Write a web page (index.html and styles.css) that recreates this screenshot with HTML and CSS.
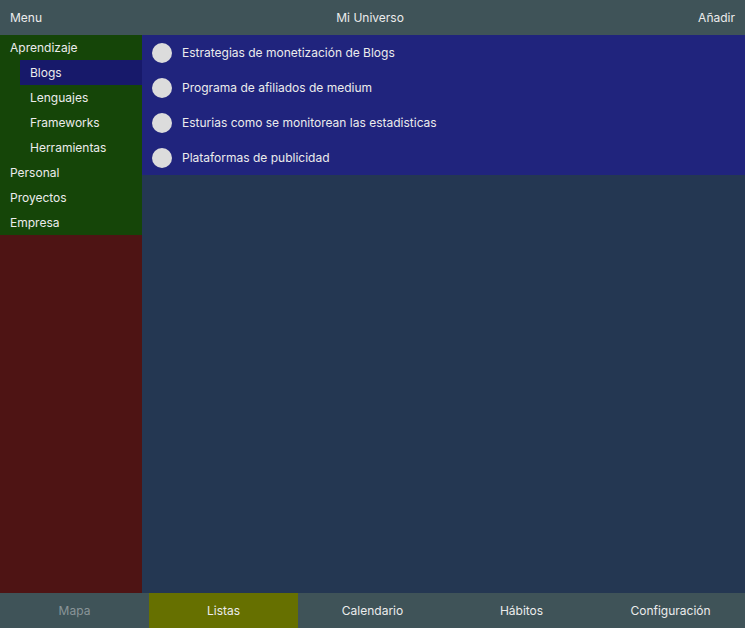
FILE: index.html
```html
<!DOCTYPE html>
<html lang="es">
<head>
<meta charset="utf-8">
<link rel="stylesheet" href="styles.css">
</head>
<body>
<div class="app">
  <header class="topbar">
    <span>Menu</span>
    <span>Mi Universo</span>
    <span>Añadir</span>
  </header>
  <div class="body">
    <aside class="sidebar">
      <nav class="menu">
        <div class="item">Aprendizaje</div>
        <div class="item sub active">Blogs</div>
        <div class="item sub">Lenguajes</div>
        <div class="item sub">Frameworks</div>
        <div class="item sub">Herramientas</div>
        <div class="item">Personal</div>
        <div class="item">Proyectos</div>
        <div class="item">Empresa</div>
      </nav>
      <div class="filler"></div>
    </aside>
    <main class="main">
      <ul class="list">
        <li class="row"><span class="dot"></span>Estrategias de monetización de Blogs</li>
        <li class="row"><span class="dot"></span>Programa de afiliados de medium</li>
        <li class="row"><span class="dot"></span>Esturias como se monitorean las estadisticas</li>
        <li class="row"><span class="dot"></span>Plataformas de publicidad</li>
      </ul>
    </main>
  </div>
  <footer class="tabs">
    <div class="tab muted">Mapa</div>
    <div class="tab active">Listas</div>
    <div class="tab">Calendario</div>
    <div class="tab">Hábitos</div>
    <div class="tab">Configuración</div>
  </footer>
</div>
</body>
</html>
```
FILE: styles.css
```css
* { box-sizing: border-box; }
html, body { margin: 0; padding: 0; height: 100%; }
body {
  font-family: Inter, "Noto Sans", sans-serif;
  font-size: 12px;
  color: #ececec;
  background: #243752;
}
.app { display: flex; flex-direction: column; height: 628px; }
.topbar {
  height: 35px;
  background: #3f5358;
  display: flex;
  justify-content: space-between;
  align-items: center;
  padding: 0 10px;
  flex: none;
}
.body { flex: 1; display: flex; min-height: 0; }
.sidebar { width: 142px; flex: none; display: flex; flex-direction: column; }
.menu { background: #154508; }
.item { height: 25px; line-height: 25px; padding-left: 10px; }
.item.sub { margin-left: 20px; }
.item.active { background: #17196a; }
.filler { flex: 1; background: #4e1414; }
.main { flex: 1; background: #243752; }
.list { list-style: none; margin: 0; padding: 0; background: #20247d; }
.row { height: 35px; display: flex; align-items: center; padding-left: 10px; }
.dot { width: 20px; height: 20px; border-radius: 50%; background: #dcdcdc; margin-right: 10px; flex: none; }
.tabs { height: 35px; display: flex; background: #3f5358; flex: none; }
.tab { flex: 1; display: flex; align-items: center; justify-content: center; }
.tab.active { background: #667000; }
.tab.muted { color: #8a9598; }
```
